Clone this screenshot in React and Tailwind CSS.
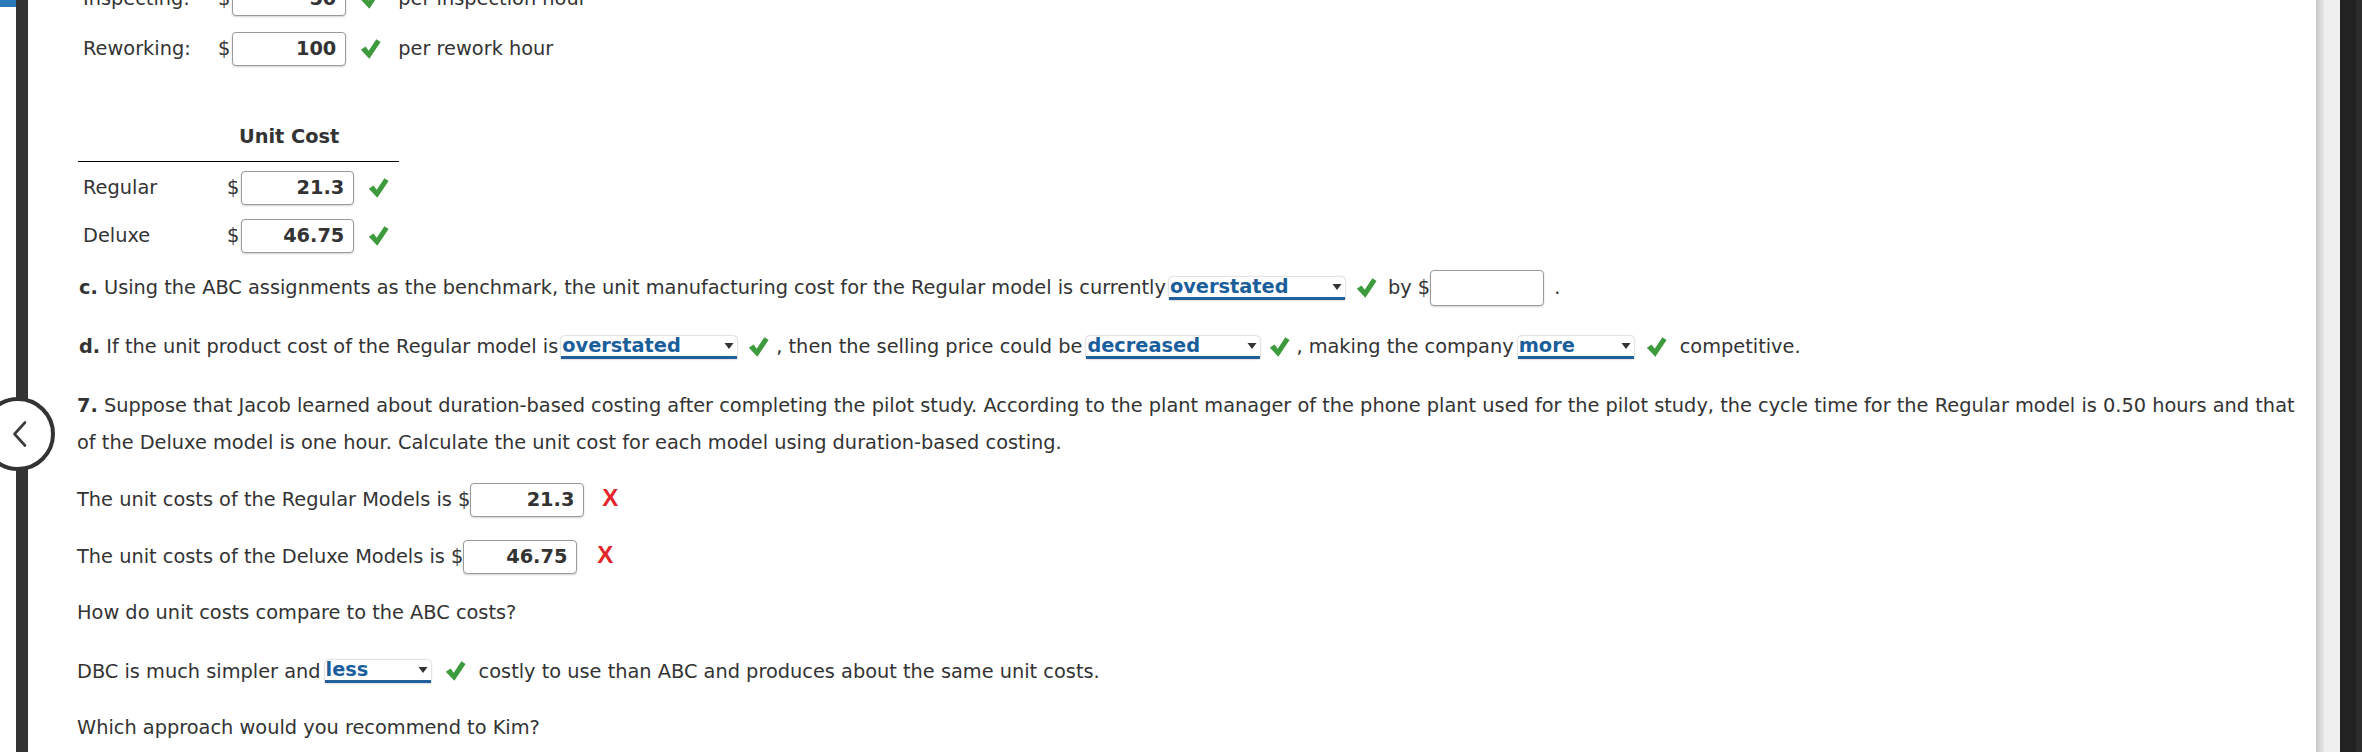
import React from 'react';

const Check = () => (
  <svg width="21" height="22" viewBox="0 0 20 20" className="shrink-0 -my-[2px]">
    <path d="M0.8 10.6 L5.3 7.5 L8.3 11.6 L15.6 0.6 L19.6 3.3 L8.9 19.2 Z" fill="#3d9a3d" />
  </svg>
);

const Cross = () => (
  <span className="font-bold text-[#e3262b] text-[24px] leading-none" style={{ fontFamily: '"Liberation Sans", Arial, sans-serif' }}>
    X
  </span>
);

const Box = ({ value, w = 'w-[114px]' }) => (
  <div className={`${w} h-[34px] shrink-0 bg-white border border-[#9a9a9a] rounded-[4px] shadow-[0_1px_2px_rgba(0,0,0,0.18)] flex items-center justify-end pr-[9px] font-bold text-[#333]`}>
    {value}
  </div>
);

const Picker = ({ value, w }) => (
  <div className={`${w} h-[23px] shrink-0 bg-white rounded-t-[4px] shadow-[0_0_2px_rgba(0,0,0,0.4)] border-b-[3px] border-[#22609a] flex items-center justify-between pl-[1px] pr-[3px]`}>
    <span className="font-bold text-[#1b5e9c] leading-none">{value}</span>
    <svg width="10" height="8" viewBox="0 0 10 8">
      <path d="M0.5 1 L9.5 1 L5 7 Z" fill="#333" />
    </svg>
  </div>
);

export default function App() {
  return (
    <div
      className="relative w-full h-[752px] flex overflow-hidden bg-white text-[#333] text-[19.35px]"
      style={{ fontFamily: '"DejaVu Sans", Verdana, sans-serif' }}
    >
      {/* left rail */}
      <div className="w-[16px] shrink-0 flex flex-col">
        <div className="h-[7px] bg-[#2c79b9]" />
      </div>
      <div className="w-[12px] shrink-0 bg-[#333]" />

      {/* back button */}
      <div className="absolute left-[-19px] top-[397px] w-[74px] h-[74px] rounded-full border-[4px] border-[#333] bg-white flex items-center justify-center pl-[4px]">
        <svg width="16" height="28" viewBox="0 0 16 28">
          <path d="M13 2.5 L2.5 14 L13 25.5" fill="none" stroke="#3a3a3a" strokeWidth="2.6" strokeLinecap="round" strokeLinejoin="round" />
        </svg>
      </div>

      {/* content */}
      <div className="flex-1 min-w-0 pl-[49px] flex flex-col">
        {/* rates */}
        <div className="mt-[-18px] h-[34px] flex items-center pl-[6px]">
          <span className="w-[135px]">Inspecting:</span>
          <span>$</span>
          <div className="ml-[2px]"><Box value="50" /></div>
          <div className="ml-[14px]"><Check /></div>
          <span className="ml-[17px]">per inspection hour</span>
        </div>
        <div className="mt-[16px] h-[34px] flex items-center pl-[6px]">
          <span className="w-[135px]">Reworking:</span>
          <span>$</span>
          <div className="ml-[2px]"><Box value="100" /></div>
          <div className="ml-[14px]"><Check /></div>
          <span className="ml-[17px]">per rework hour</span>
        </div>

        {/* unit cost table */}
        <div className="w-[321px] ml-[1px] mt-[59px]">
          <div className="h-[24px] leading-[24px] pb-[12px] box-content border-b border-black flex">
            <span className="ml-[161px] font-bold">Unit Cost</span>
          </div>
          <div className="mt-[9px] h-[34px] flex items-center pl-[5px]">
            <span className="w-[144px]">Regular</span>
            <span>$</span>
            <div className="ml-[2px]"><Box value="21.3" w="w-[113px]" /></div>
            <div className="ml-[14px]"><Check /></div>
          </div>
          <div className="mt-[14px] h-[34px] flex items-center pl-[5px]">
            <span className="w-[144px]">Deluxe</span>
            <span>$</span>
            <div className="ml-[2px]"><Box value="46.75" w="w-[113px]" /></div>
            <div className="ml-[14px]"><Check /></div>
          </div>
        </div>

        {/* c */}
        <div className="mt-[17px] h-[36px] flex items-center pl-[2px] whitespace-nowrap">
          <span><b>c.</b> Using the ABC assignments as the benchmark, the unit manufacturing cost for the Regular model is currently</span>
          <div className="ml-[3px]"><Picker value="overstated" w="w-[176px]" /></div>
          <div className="ml-[11px]"><Check /></div>
          <span className="ml-[11px]">by $</span>
          <div className="w-[114px] h-[36px] bg-white border border-[#9a9a9a] rounded-[4px] shadow-[0_1px_2px_rgba(0,0,0,0.18)]" />
          <span className="ml-[10px]">.</span>
        </div>

        {/* d */}
        <div className="mt-[23px] h-[36px] flex items-center pl-[2px] whitespace-nowrap">
          <span><b>d.</b> If the unit product cost of the Regular model is</span>
          <div className="ml-[3px]"><Picker value="overstated" w="w-[176px]" /></div>
          <div className="ml-[11px]"><Check /></div>
          <span className="ml-[7px]">, then the selling price could be</span>
          <div className="ml-[4px]"><Picker value="decreased" w="w-[174px]" /></div>
          <div className="ml-[9px]"><Check /></div>
          <span className="ml-[6px]">, making the company</span>
          <div className="ml-[4px]"><Picker value="more" w="w-[116px]" /></div>
          <div className="ml-[12px]"><Check /></div>
          <span className="ml-[13px]">competitive.</span>
        </div>

        {/* 7 */}
        <p className="mt-[22px] leading-[37px]">
          <b>7.</b> Suppose that Jacob learned about duration-based costing after completing the pilot study. According to the plant manager of the phone plant used for the pilot study, the cycle time for the Regular model is 0.50 hours and that
          <br />
          of the Deluxe model is one hour. Calculate the unit cost for each model using duration-based costing.
        </p>

        <div className="mt-[22px] h-[34px] flex items-center whitespace-nowrap">
          <span>The unit costs of the Regular Models is $</span>
          <Box value="21.3" w="w-[114px]" />
          <div className="ml-[18px]"><Cross /></div>
        </div>
        <div className="mt-[23px] h-[34px] flex items-center whitespace-nowrap">
          <span>The unit costs of the Deluxe Models is $</span>
          <Box value="46.75" w="w-[114px]" />
          <div className="ml-[20px]"><Cross /></div>
        </div>

        <div className="mt-[27px] h-[24px] leading-[24px]">How do unit costs compare to the ABC costs?</div>

        <div className="mt-[34px] h-[24px] flex items-center whitespace-nowrap">
          <span>DBC is much simpler and</span>
          <div className="ml-[4px]"><Picker value="less" w="w-[106px]" /></div>
          <div className="ml-[14px]"><Check /></div>
          <span className="ml-[13px]">costly to use than ABC and produces about the same unit costs.</span>
        </div>

        <div className="mt-[33px] h-[24px] leading-[24px]">Which approach would you recommend to Kim?</div>
      </div>

      {/* right scroll track */}
      <div className="w-[8px] shrink-0 bg-gradient-to-r from-[#c9c9c9] to-[#e6e6e6]" />
      <div className="w-[16px] shrink-0 bg-[#efefef]" />
      <div className="w-[16px] shrink-0 bg-[#222]" />
      <div className="w-[6px] shrink-0 bg-[#2c2c2c]" />
    </div>
  );
}
